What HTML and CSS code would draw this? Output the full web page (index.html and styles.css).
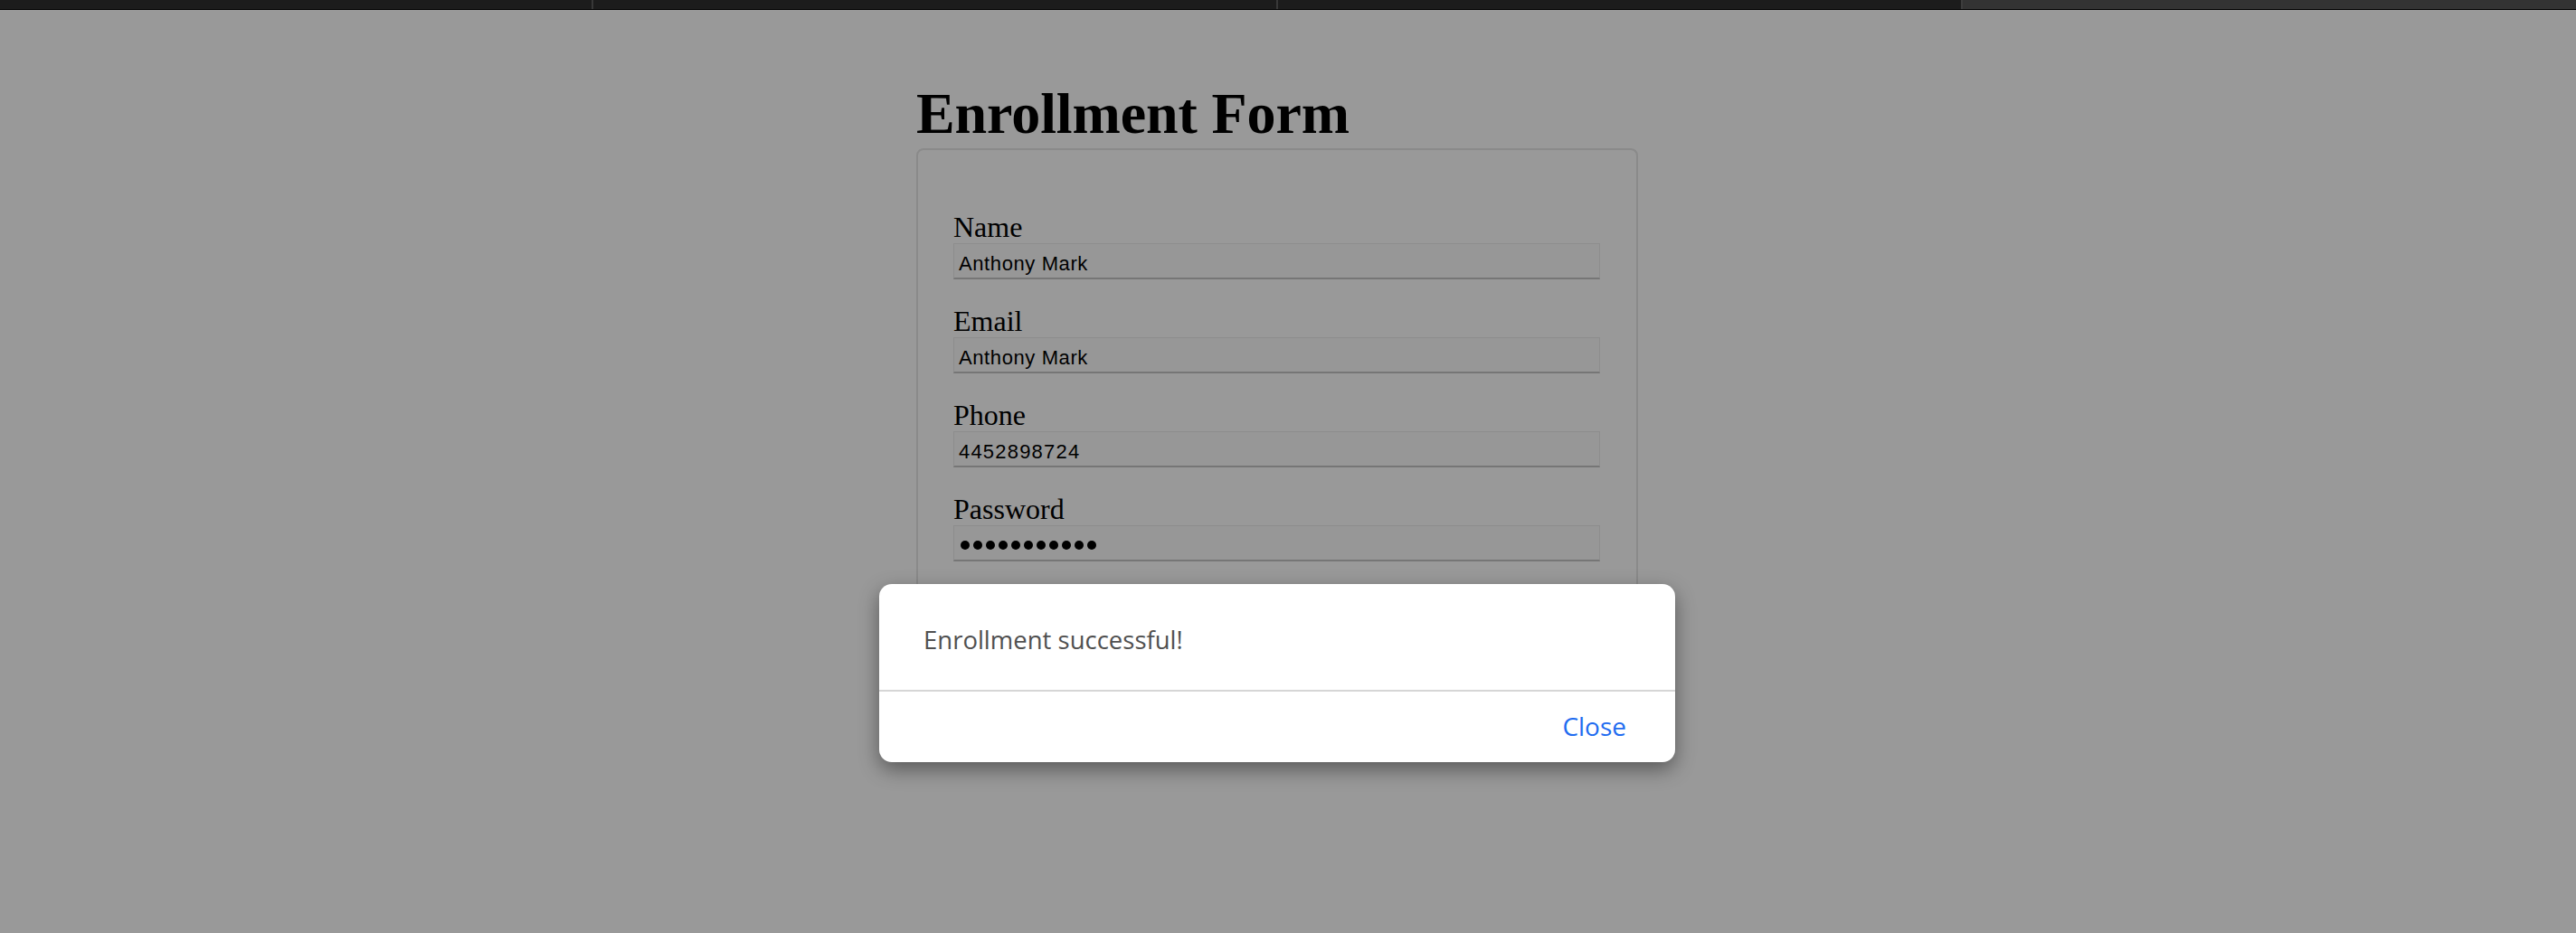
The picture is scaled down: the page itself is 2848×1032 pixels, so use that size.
FILE: index.html
```html
<!DOCTYPE html>
<html lang="en">
<head>
<meta charset="utf-8">
<title>Enrollment Form</title>
<link rel="stylesheet" href="styles.css">
</head>
<body>
<div class="tabbar">
  <div class="tab tab-first"></div>
  <div class="tab"></div>
  <div class="tab"></div>
  <div class="tab tab-active"></div>
</div>
<main class="page">
  <div class="container">
    <h1 class="title">Enrollment Form</h1>
    <form class="card">
      <div class="group">
        <label class="label">Name</label>
        <div class="field"><span class="value">Anthony Mark</span></div>
      </div>
      <div class="group">
        <label class="label">Email</label>
        <div class="field"><span class="value">Anthony Mark</span></div>
      </div>
      <div class="group">
        <label class="label">Phone</label>
        <div class="field"><span class="value value-num">4452898724</span></div>
      </div>
      <div class="group">
        <label class="label">Password</label>
        <div class="field field-password">
          <span class="dot"></span><span class="dot"></span><span class="dot"></span><span class="dot"></span><span class="dot"></span><span class="dot"></span><span class="dot"></span><span class="dot"></span><span class="dot"></span><span class="dot"></span><span class="dot"></span>
        </div>
      </div>
      <div class="submit">Enroll</div>
    </form>
  </div>
</main>
<div class="modal">
  <div class="modal-body">Enrollment successful!</div>
  <div class="modal-footer"><span class="close">Close</span></div>
</div>
</body>
</html>
```
FILE: styles.css
```css
html, body {
  margin: 0;
  padding: 0;
}
body {
  background: #999999;
  width: 2848px;
  height: 1032px;
  overflow: hidden;
  position: relative;
}
.tabbar {
  display: flex;
  height: 10px;
  border-bottom: 1px solid #000;
  background: #1c1c1c;
}
.tab {
  flex: 0 0 auto;
  width: 757px;
  border-left: 2px solid #383838;
  box-sizing: border-box;
}
.tab-first {
  width: 654px;
  border-left: none;
}
.tab-active {
  flex: 1 1 auto;
  background: #333333;
  border-left: 2px solid #3c3c3c;
}
.page {
  display: flex;
  justify-content: center;
  padding-right: 24px;
}
.container {
  width: 798px;
}
.title {
  font-family: "Liberation Serif", "Times New Roman", serif;
  font-weight: bold;
  font-size: 64px;
  line-height: 71px;
  letter-spacing: -0.1px;
  margin: 79px 0 3px 0;
  color: #000;
}
.card {
  display: block;
  border: 2px solid #8a8a8a;
  border-radius: 8px;
  padding: 68px 40px 40px 39px;
}
.group {
  margin-bottom: 29px;
}
.label {
  display: block;
  font-family: "Liberation Serif", "Times New Roman", serif;
  font-size: 32px;
  line-height: 35px;
  color: #000;
}
.field {
  box-sizing: border-box;
  height: 40px;
  border: 1px solid #8d8d8d;
  border-bottom: 2px solid #767676;
  background: #979797;
  padding: 6px 0 0 5px;
  font-family: "Liberation Sans", Arial, sans-serif;
  font-size: 22px;
  line-height: 31px;
  letter-spacing: 0.6px;
  color: #000;
}
.value-num {
  letter-spacing: 1.2px;
}
.field-password {
  display: flex;
  align-items: center;
  gap: 4px;
  padding: 4px 0 0 7px;
}
.dot {
  width: 10px;
  height: 10px;
  border-radius: 50%;
  background: #000;
}
.submit {
  width: 120px;
  height: 40px;
  background: #8f8f8f;
  font-family: "Liberation Sans", Arial, sans-serif;
  font-size: 22px;
  line-height: 40px;
  text-align: center;
}
.modal {
  position: absolute;
  left: 972px;
  top: 646px;
  width: 880px;
  height: 197px;
  background: #fff;
  border-radius: 14px;
  box-shadow: 0 8px 22px rgba(0, 0, 0, 0.42);
  display: flex;
  flex-direction: column;
  font-family: "Open Sans", "Liberation Sans", sans-serif;
}
.modal-body {
  height: 119px;
  box-sizing: border-box;
  padding: 43px 40px 0 49px;
  font-size: 27.5px;
  line-height: 37px;
  color: #505050;
  border-bottom: 2px solid #d6d6d6;
}
.modal-footer {
  flex: 1 1 auto;
  display: flex;
  justify-content: flex-end;
  padding: 19px 54px 0 0;
}
.close {
  font-size: 28px;
  line-height: 38px;
  color: #1f6cf0;
}
```
